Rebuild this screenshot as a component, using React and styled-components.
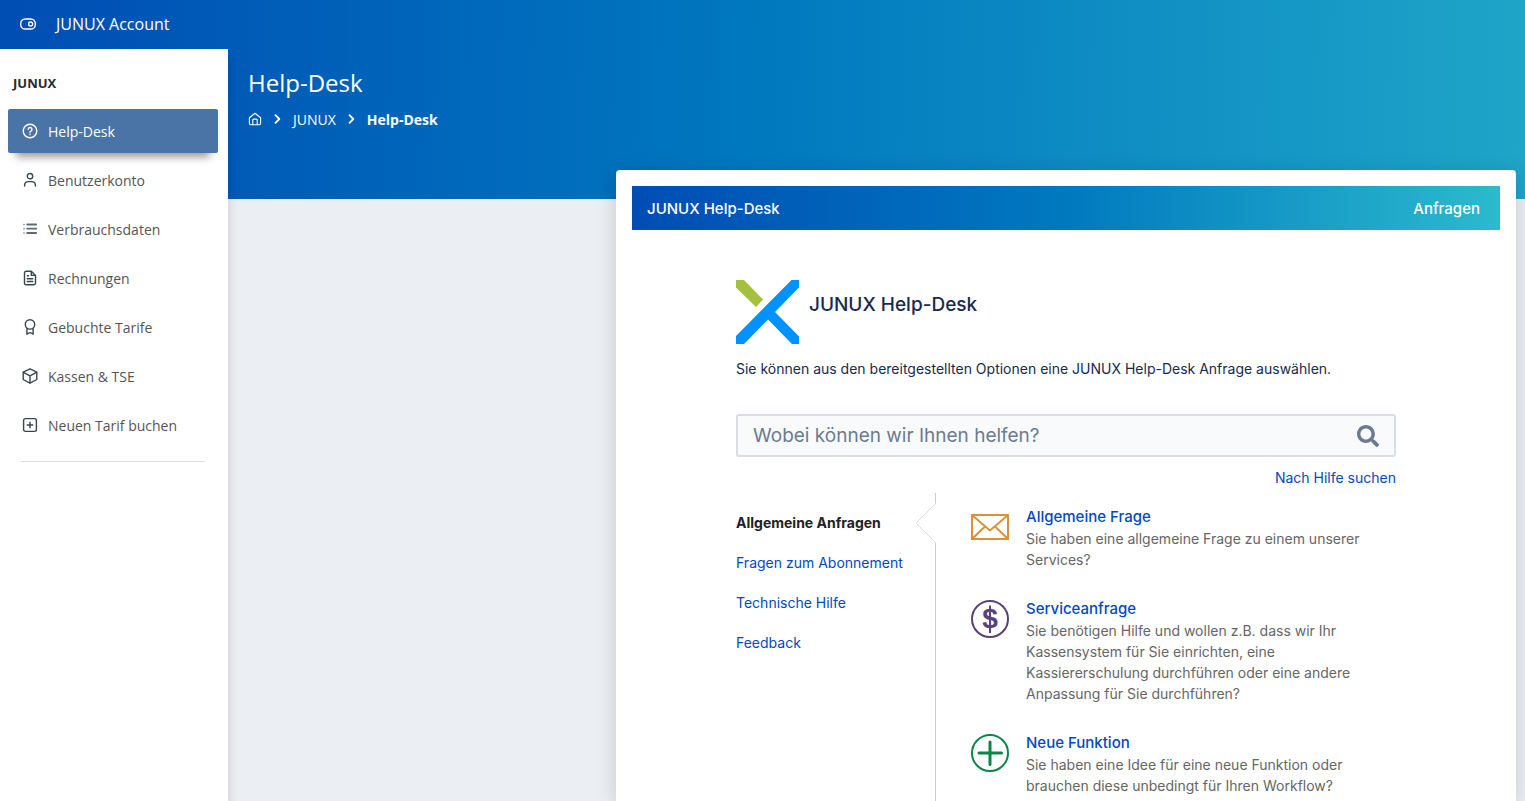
import React from "react";
import styled, { createGlobalStyle } from "styled-components";
import { FaSearch } from "react-icons/fa";

const sidebarLinks = [
  { label: "Help-Desk", icon: HelpIcon, active: true },
  { label: "Benutzerkonto", icon: UserIcon },
  { label: "Verbrauchsdaten", icon: ListIcon },
  { label: "Rechnungen", icon: FileIcon },
  { label: "Gebuchte Tarife", icon: AwardIcon },
  { label: "Kassen & TSE", icon: BoxIcon },
  { label: "Neuen Tarif buchen", icon: PlusIcon },
];

const categories = [
  "Allgemeine Anfragen",
  "Fragen zum Abonnement",
  "Technische Hilfe",
  "Feedback",
];

const requests = [
  {
    title: "Allgemeine Frage",
    text: "Sie haben eine allgemeine Frage zu einem unserer Services?",
    icon: MailBadge,
  },
  {
    title: "Serviceanfrage",
    text: "Sie benötigen Hilfe und wollen z.B. dass wir Ihr Kassensystem für Sie einrichten, eine Kassiererschulung durchführen oder eine andere Anpassung für Sie durchführen?",
    icon: DollarBadge,
  },
  {
    title: "Neue Funktion",
    text: "Sie haben eine Idee für eine neue Funktion oder brauchen diese unbedingt für Ihren Workflow?",
    icon: PlusBadge,
  },
];

export default function App() {
  return (
    <Page>
      <GlobalStyle />
      <TopBar>
        <MenuButton type="button" aria-label="Menü umschalten">
          <ToggleIcon />
        </MenuButton>
        <Brand href="#">JUNUX Account</Brand>
      </TopBar>
      <Body>
        <Sidebar>
          <SidebarTitle>JUNUX</SidebarTitle>
          <nav>
            {sidebarLinks.map(({ label, icon: Icon, active }) => (
              <SidebarLink key={label} href="#" $active={active}>
                <Icon />
                {label}
              </SidebarLink>
            ))}
          </nav>
          <Divider />
        </Sidebar>
        <Main>
          <PageTitle>Help-Desk</PageTitle>
          <Breadcrumb>
            <Crumb href="#" aria-label="Startseite">
              <HomeIcon />
            </Crumb>
            <ChevronIcon />
            <Crumb href="#">JUNUX</Crumb>
            <ChevronIcon />
            <CurrentCrumb>Help-Desk</CurrentCrumb>
          </Breadcrumb>
          <Card>
            <PortalBar>
              <PortalLink href="#">JUNUX Help-Desk</PortalLink>
              <PortalLink href="#">Anfragen</PortalLink>
            </PortalBar>
            <Portal>
              <PortalHead>
                <Logo />
                <PortalTitle>JUNUX Help-Desk</PortalTitle>
              </PortalHead>
              <Intro>
                Sie können aus den bereitgestellten Optionen eine JUNUX
                Help-Desk Anfrage auswählen.
              </Intro>
              <SearchBox>
                <SearchInput
                  type="text"
                  aria-label="Suche"
                  placeholder="Wobei können wir Ihnen helfen?"
                />
                <SearchButton type="button" aria-label="Suchen">
                  <FaSearch size={22} />
                </SearchButton>
              </SearchBox>
              <SearchHelp href="#">Nach Hilfe suchen</SearchHelp>
              <Columns>
                <Categories>
                  {categories.map((name, i) => (
                    <Category key={name} href="#" $active={i === 0}>
                      {name}
                    </Category>
                  ))}
                </Categories>
                <Requests>
                  <Notch />
                  {requests.map(({ title, text, icon: Icon }) => (
                    <Request key={title}>
                      <Icon />
                      <div>
                        <RequestTitle href="#">{title}</RequestTitle>
                        <RequestText>{text}</RequestText>
                      </div>
                    </Request>
                  ))}
                </Requests>
              </Columns>
            </Portal>
          </Card>
        </Main>
      </Body>
    </Page>
  );
}

function ToggleIcon() {
  return (
    <LineSvg viewBox="0 0 16 16">
      <rect x="0.7" y="3" width="14.6" height="10" rx="4.6" />
      <circle cx="10.6" cy="8" r="2" />
    </LineSvg>
  );
}

function HelpIcon() {
  return (
    <LineSvg viewBox="0 0 16 16">
      <circle cx="8" cy="8" r="6.8" />
      <path d="M6.2 6.2a1.9 1.9 0 1 1 2.7 1.9c-.6.3-.9.5-.9 1.1" />
      <path d="M8 11.2v.3" />
    </LineSvg>
  );
}

function UserIcon() {
  return (
    <LineSvg viewBox="0 0 16 16">
      <circle cx="8" cy="4.2" r="2.7" />
      <path d="M2.6 14v-1a3.6 3.6 0 0 1 3.6-3.4h3.6a3.6 3.6 0 0 1 3.6 3.4v1" />
    </LineSvg>
  );
}

function ListIcon() {
  return (
    <LineSvg viewBox="0 0 16 16" opacity="0.8">
      <path d="M5.2 3.500h9M5.2 7.700h9M5.2 12h9" strokeWidth="1.800" />
      <path d="M1.600 3.500h.8M1.600 7.700h.8M1.600 12h.8" opacity="0.6" />
    </LineSvg>
  );
}

function FileIcon() {
  return (
    <LineSvg viewBox="0 0 16 16">
      <path d="M9.3 1.2H4.2a1.7 1.7 0 0 0-1.7 1.7v10.2a1.7 1.7 0 0 0 1.7 1.7h7.6a1.7 1.7 0 0 0 1.7-1.7V5.4L9.3 1.2v4.2h4.2" />
      <path d="M5.3 5.8h1.2M5.3 8.7h5.4M5.3 11.5h5.4" />
    </LineSvg>
  );
}

function AwardIcon() {
  return (
    <LineSvg viewBox="0 0 16 16">
      <circle cx="8" cy="5.4" r="4.7" />
      <path d="M4.900 9.200v6l3.100-1.700 3.100 1.700v-6" />
    </LineSvg>
  );
}

function BoxIcon() {
  return (
    <LineSvg viewBox="0 0 16 16">
      <path d="M8 .9l6.8 3.3v7.3L8 15.1l-6.8-3.6V4.2L8 .9z" />
      <path d="M1.4 4.4L8 7.8l6.6-3.4M8 7.8v7.1" />
    </LineSvg>
  );
}

function PlusIcon() {
  return (
    <LineSvg viewBox="0 0 16 16">
      <rect x="1.6" y="1.6" width="12.8" height="12.8" rx="1.8" />
      <path d="M8 5.2v5.6M5.2 8h5.6" />
    </LineSvg>
  );
}

function HomeIcon() {
  return (
    <CrumbSvg viewBox="0 0 14 14">
      <path d="M1.4 5.8L7 1.3l5.6 4.5v5.7a1.2 1.2 0 0 1-1.2 1.2H2.6a1.2 1.2 0 0 1-1.2-1.2V5.8z" />
      <path d="M4.800 12.500V8.100a1 1 0 0 1 1-1h2.400a1 1 0 0 1 1 1v4.400" />
    </CrumbSvg>
  );
}

function ChevronIcon() {
  return (
    <ChevronSvg viewBox="0 0 6 10">
      <path d="M1 1.2L4.8 5 1 8.8" />
    </ChevronSvg>
  );
}

function Logo() {
  return (
    <svg width="63" height="64" viewBox="0 0 63 64" aria-hidden="true">
      <path fill="#a3c13c" d="M0 0h8l19 19.5-7 7.5L0 7.5z" />
      <path
        fill="#0092ff"
        d="M55.500 0H63v7.500L39 32l24 24.500V64h-7L32 39.500 8 64H0v-8z"
      />
    </svg>
  );
}

function MailBadge() {
  return (
    <BadgeSvg viewBox="0 0 38 38" $color="#d9923b">
      <rect x="1" y="7" width="36" height="24" />
      <path
        d="M1.500 7.500L19 22.500 36.500 7.500M1.500 30.500L14 18.500M36.500 30.500L24 18.500"
        strokeWidth="2"
      />
    </BadgeSvg>
  );
}

function DollarBadge() {
  return (
    <BadgeSvg viewBox="0 0 38 38" $color="#5a4179">
      <circle cx="19" cy="19" r="18" />
      <path d="M19 5.500v27.500" />
      <text x="19" y="28">$</text>
    </BadgeSvg>
  );
}

function PlusBadge() {
  return (
    <BadgeSvg viewBox="0 0 38 38" $color="#0a8646">
      <circle cx="19" cy="19" r="18" />
      <path d="M19 8v22.500M8 19h22.500" strokeWidth="3" strokeLinecap="round" />
    </BadgeSvg>
  );
}

function Notch() {
  return (
    <NotchSvg viewBox="0 0 22 40">
      <rect x="20" width="2" height="40" fill="#fff" />
      <path d="M21 0L1 20l20 20" fill="none" stroke="#dedede" />
    </NotchSvg>
  );
}

const GlobalStyle = createGlobalStyle`
  * {
    box-sizing: border-box;
  }

  body {
    margin: 0;
    font-family: "Open Sans", "Noto Sans", sans-serif;
    font-size: 14px;
    color: #555;
  }

  a {
    text-decoration: none;
  }
`;

const Page = styled.div`
  display: flex;
  flex-direction: column;
  min-height: 100vh;
  background: linear-gradient(91deg, #004db4 0%, #0079bf 50%, #1fa5c8 100%)
    no-repeat top / 100% 199px #ebeff4;
`;

const TopBar = styled.header`
  display: flex;
  align-items: center;
  gap: 20px;
  height: 49px;
  padding: 0 20px 2px;
  color: #fff;
`;

const MenuButton = styled.button`
  display: flex;
  padding: 0;
  border: 0;
  background: none;
  color: inherit;
`;

const Brand = styled.a`
  font-size: 16px;
  color: #fff;
`;

const Body = styled.div`
  display: flex;
  flex: 1;
`;

const Sidebar = styled.aside`
  flex: 0 0 228px;
  padding: 24px 10px 0 8px;
  background: #fff;
  box-shadow: 0 10px 10px rgba(0, 0, 0, 0.16);
`;

const SidebarTitle = styled.h2`
  margin: 0 0 16px 5px;
  font-size: 13px;
  font-weight: 700;
  line-height: 20px;
  color: #2a2a2a;
`;

const SidebarLink = styled.a`
  display: flex;
  align-items: center;
  gap: 10px;
  height: 44px;
  margin-bottom: 5px;
  padding: 0 14px;
  border-radius: 2px;
  color: ${(p) => (p.$active ? "#fff" : "#555")};
  font-weight: ${(p) => (p.$active ? 500 : 400)};
  background: ${(p) => (p.$active ? "#4a74a6" : "transparent")};
  box-shadow: ${(p) => (p.$active ? "0 12px 8px -8px rgba(0, 0, 0, 0.4)" : "none")};

  svg {
    color: ${(p) => (p.$active ? "#fff" : "#37474f")};
  }
`;

const Divider = styled.hr`
  margin: 14px 13px 0;
  border: 0;
  border-top: 1px solid #ddd;
`;

const Main = styled.main`
  display: flex;
  flex: 1;
  flex-direction: column;
  min-width: 0;
  padding: 16px 9px 0 20px;
`;

const PageTitle = styled.h1`
  margin: 0;
  font-size: 24px;
  font-weight: 400;
  line-height: 36px;
  color: #fff;
`;

const Breadcrumb = styled.nav`
  display: flex;
  align-items: center;
  gap: 12px;
  height: 20px;
  margin: 8px 0 41px;
  color: #fff;
`;

const Crumb = styled.a`
  display: flex;
  font-weight: 500;
  color: #fff;
`;

const CurrentCrumb = styled.span`
  font-weight: 700;
`;

const Card = styled.section`
  flex: 1;
  width: 100%;
  max-width: 900px;
  margin-left: auto;
  padding: 16px 16px 0;
  display: flex;
  flex-direction: column;
  border-radius: 4px 4px 0 0;
  background: #fff;
  box-shadow: 0 4px 20px rgba(0, 0, 0, 0.16);
  font-family: Inter, "Liberation Sans", sans-serif;
`;

const PortalBar = styled.header`
  display: flex;
  align-items: center;
  justify-content: space-between;
  height: 44px;
  padding: 0 20px 0 15px;
  background: linear-gradient(90deg, #004db4, #0079bf 50%, #2cbacd);
`;

const PortalLink = styled.a`
  font-size: 15px;
  font-weight: 500;
  color: #fff;
`;

const Portal = styled.div`
  display: flex;
  flex: 1;
  flex-direction: column;
  width: 100%;
  max-width: 660px;
  margin: 0 auto;
  padding-top: 50px;
`;

const PortalHead = styled.div`
  display: flex;
  gap: 10px;
`;

const PortalTitle = styled.h2`
  margin: 10px 0 0;
  font-size: 19px;
  font-weight: 500;
  line-height: 30px;
  color: #172b4d;
`;

const Intro = styled.p`
  margin: 15px 0 35px;
  line-height: 20px;
  color: #172b4d;
`;

const SearchBox = styled.div`
  display: flex;
  align-items: center;
  height: 43px;
  padding: 0 15px;
  border: 2px solid #dadee3;
  border-radius: 3px;
  background: #f9fafc;
`;

const SearchInput = styled.input`
  flex: 1;
  min-width: 0;
  padding: 0;
  border: 0;
  outline: 0;
  background: none;
  font: 19px Inter, "Liberation Sans", sans-serif;
  color: #172b4d;

  &::placeholder {
    color: #6b7a90;
    opacity: 1;
  }
`;

const SearchButton = styled.button`
  display: flex;
  padding: 0;
  border: 0;
  background: none;
  color: #6b7a90;
`;

const SearchHelp = styled.a`
  align-self: flex-end;
  margin: 11px 0 5px;
  line-height: 20px;
  color: #0049c6;
`;

const Columns = styled.div`
  display: flex;
  flex: 1;
`;

const Categories = styled.nav`
  display: flex;
  flex-direction: column;
  flex: 0 0 199px;
  gap: 20px;
  padding-top: 20px;
`;

const Category = styled.a`
  line-height: 20px;
  font-weight: ${(p) => (p.$active ? 700 : 400)};
  color: ${(p) => (p.$active ? "#222" : "#0049c6")};
`;

const Requests = styled.div`
  position: relative;
  display: flex;
  flex: 1;
  flex-direction: column;
  gap: 28px;
  padding: 13px 20px 0 35px;
  border-left: 1px solid #ccc;
`;

const Request = styled.article`
  display: flex;
  gap: 17px;
`;

const RequestTitle = styled.a`
  display: block;
  font-size: 15px;
  font-weight: 500;
  line-height: 22px;
  color: #0049c6;
`;

const RequestText = styled.p`
  margin: 0;
  line-height: 21px;
  color: #666;
`;

const LineSvg = styled.svg`
  flex: none;
  width: 16px;
  height: 16px;
  fill: none;
  stroke: currentColor;
  stroke-width: 1.4;
  stroke-linecap: round;
  stroke-linejoin: round;
`;

const CrumbSvg = styled(LineSvg)`
  width: 14px;
  height: 14px;
  stroke-width: 1.1;
`;

const ChevronSvg = styled(LineSvg)`
  width: 7px;
  height: 10px;
  stroke-width: 1.8;
`;

const BadgeSvg = styled.svg`
  flex: none;
  width: 38px;
  height: 38px;
  margin-top: 2px;
  fill: none;
  stroke: ${(p) => p.$color};
  stroke-width: 2;

  text {
    fill: ${(p) => p.$color};
    stroke: none;
    font: bold 28px "Liberation Sans", sans-serif;
    text-anchor: middle;
  }
`;

const NotchSvg = styled.svg`
  position: absolute;
  top: 10px;
  left: -21px;
  width: 22px;
  height: 40px;
`;
